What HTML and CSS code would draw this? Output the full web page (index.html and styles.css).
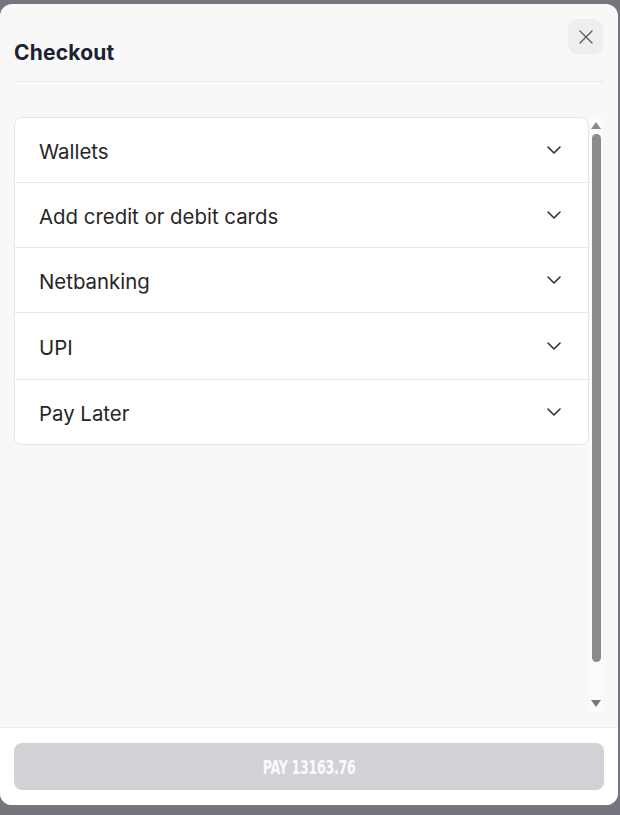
FILE: index.html
```html
<!DOCTYPE html>
<html lang="en">
<head>
<meta charset="utf-8">
<title>Checkout</title>
<link rel="stylesheet" href="styles.css">
</head>
<body>
<div class="modal">
  <header class="modal-header">
    <h1 class="modal-title">Checkout</h1>
    <button class="close-btn" aria-label="Close">
      <svg width="14" height="14" viewBox="0 0 14 14"><path d="M1 1 L13 13 M13 1 L1 13" stroke="#555" stroke-width="1.2" fill="none" stroke-linecap="round"/></svg>
    </button>
  </header>
  <div class="modal-body">
    <div class="methods">
      <div class="method"><span>Wallets</span><svg class="chev" width="14" height="8" viewBox="0 0 14 8"><path d="M1 1 L7 7 L13 1" stroke="#333" stroke-width="1.6" fill="none" stroke-linecap="round" stroke-linejoin="round"/></svg></div>
      <div class="method"><span>Add credit or debit cards</span><svg class="chev" width="14" height="8" viewBox="0 0 14 8"><path d="M1 1 L7 7 L13 1" stroke="#333" stroke-width="1.6" fill="none" stroke-linecap="round" stroke-linejoin="round"/></svg></div>
      <div class="method"><span>Netbanking</span><svg class="chev" width="14" height="8" viewBox="0 0 14 8"><path d="M1 1 L7 7 L13 1" stroke="#333" stroke-width="1.6" fill="none" stroke-linecap="round" stroke-linejoin="round"/></svg></div>
      <div class="method tall"><span>UPI</span><svg class="chev" width="14" height="8" viewBox="0 0 14 8"><path d="M1 1 L7 7 L13 1" stroke="#333" stroke-width="1.6" fill="none" stroke-linecap="round" stroke-linejoin="round"/></svg></div>
      <div class="method"><span>Pay Later</span><svg class="chev" width="14" height="8" viewBox="0 0 14 8"><path d="M1 1 L7 7 L13 1" stroke="#333" stroke-width="1.6" fill="none" stroke-linecap="round" stroke-linejoin="round"/></svg></div>
    </div>
    <div class="scrollbar">
      <div class="sb-arrow sb-up"></div>
      <div class="sb-thumb"></div>
      <div class="sb-arrow sb-down"></div>
    </div>
  </div>
  <footer class="modal-footer">
    <button class="pay-btn"><span class="pay-label">PAY 13163.76</span></button>
  </footer>
</div>
</body>
</html>
```
FILE: styles.css
```css
html, body {
  margin: 0;
  padding: 0;
}
body {
  background: #76747c;
  height: 815px;
  overflow: hidden;
  font-family: Inter, "Noto Sans", sans-serif;
  padding-top: 4px;
  box-sizing: border-box;
}
.modal {
  width: 618px;
  height: 801px;
  background: #f8f8f8;
  border-radius: 12px;
  display: flex;
  flex-direction: column;
  overflow: hidden;
}
.modal-header {
  height: 78px;
  box-sizing: border-box;
  margin: 0 14px;
  border-bottom: 1px solid #e9e9ea;
  display: flex;
  justify-content: space-between;
  align-items: flex-start;
  padding-top: 15px;
  flex-shrink: 0;
}
.modal-title {
  margin: 22px 0 0;
  font-size: 21px;
  line-height: 24px;
  font-weight: 700;
  color: #1b2232;
  letter-spacing: 0.2px;
}
.close-btn {
  width: 35px;
  height: 35px;
  border: none;
  border-radius: 9px;
  background: #eeeef0;
  display: flex;
  align-items: center;
  justify-content: center;
  padding: 0;
  margin-right: 1px;
}
.modal-body {
  flex: 1;
  display: flex;
  padding: 35px 15px 15px 14px;
  min-height: 0;
}
.methods {
  flex: 1;
  align-self: flex-start;
  background: #fff;
  border: 1px solid #e6e6e8;
  border-radius: 8px;
}
.method {
  height: 64px;
  display: flex;
  align-items: center;
  justify-content: space-between;
  padding: 0 27px 0 24px;
  font-size: 20.4px;
  font-weight: 400;
  color: #262626;
}
.method.tall {
  height: 66px;
}
.method + .method {
  border-top: 1px solid #e6e6e8;
}
.method span {
  padding-top: 3px;
}
.chev {
  display: block;
}
.scrollbar {
  width: 14px;
  background: #fbfbfb;
  display: flex;
  flex-direction: column;
  align-items: center;
  padding: 5px 0 5px;
  box-sizing: border-box;
}
.sb-arrow {
  width: 0;
  height: 0;
  border-left: 5px solid transparent;
  border-right: 5px solid transparent;
}
.sb-up {
  border-bottom: 7px solid #8a8a8a;
}
.sb-down {
  border-top: 7px solid #7a7a7a;
}
.sb-thumb {
  width: 9px;
  flex: 1;
  margin: 5px 0 38px;
  background: #8b8b8b;
  border-radius: 5px;
}
.modal-footer {
  flex-shrink: 0;
  background: #fff;
  border-top: 1px solid #ececec;
  padding: 15px 14px;
}
.pay-btn {
  display: flex;
  align-items: center;
  justify-content: center;
  width: 590px;
  height: 47px;
  border: none;
  border-radius: 8px;
  background: #d1d2d6;
  padding: 0;
}
.pay-label {
  display: inline-block;
  color: #fafafb;
  font-family: "DejaVu Sans Condensed", "DejaVu Sans", sans-serif;
  font-stretch: condensed;
  font-weight: 700;
  font-size: 20px;
  letter-spacing: -0.4px;
  transform: scaleX(0.7);
}
```
